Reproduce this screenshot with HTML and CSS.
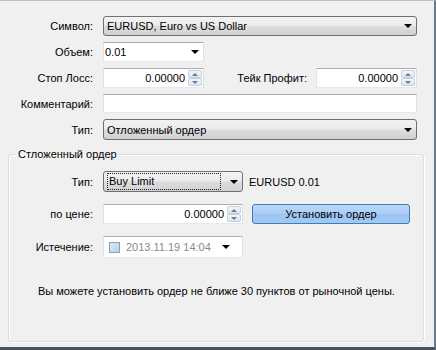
FILE: index.html
```html
<!DOCTYPE html>
<html lang="ru">

<head>
    <meta charset="UTF-8">
    <meta name="viewport" content="width=device-width, initial-scale=1.0">
    <title>Ордер</title>
    <link rel="stylesheet" href="styles.css">
</head>

<body>
    <div class="window">
        <div class="form">
            <label class="lbl">Символ:</label>
            <div class="combo combo-btn">
                <span class="combo-text">EURUSD, Euro vs US Dollar</span>
                <span class="arrow"></span>
            </div>

            <label class="lbl">Объем:</label>
            <div class="combo combo-edit volume">
                <span class="combo-text">0.01</span>
                <span class="arrow"></span>
            </div>

            <label class="lbl">Стоп Лосс:</label>
            <div class="pair">
                <div class="spin">
                    <span class="spin-value">0.00000</span>
                    <span class="spin-btns"><span class="up"></span><span class="down"></span></span>
                </div>
                <label class="lbl tp">Тейк Профит:</label>
                <div class="spin">
                    <span class="spin-value">0.00000</span>
                    <span class="spin-btns"><span class="up"></span><span class="down"></span></span>
                </div>
            </div>

            <label class="lbl">Комментарий:</label>
            <div class="edit"></div>

            <label class="lbl">Тип:</label>
            <div class="combo combo-btn">
                <span class="combo-text">Отложенный ордер</span>
                <span class="arrow"></span>
            </div>
        </div>

        <fieldset class="group">
            <legend>Стложенный ордер</legend>
            <div class="group-form">
                <label class="lbl">Тип:</label>
                <div class="line">
                    <div class="combo combo-btn narrow">
                        <span class="combo-text focus">Buy Limit</span>
                        <span class="arrow"></span>
                    </div>
                    <span class="info">EURUSD 0.01</span>
                </div>

                <label class="lbl">по цене:</label>
                <div class="line">
                    <div class="spin narrow">
                        <span class="spin-value">0.00000</span>
                        <span class="spin-btns"><span class="up"></span><span class="down"></span></span>
                    </div>
                    <button class="btn-set">Установить ордер</button>
                </div>

                <label class="lbl">Истечение:</label>
                <div class="line">
                    <div class="date narrow">
                        <span class="check"></span>
                        <span class="date-text">2013.11.19 14:04</span>
                        <span class="arrow"></span>
                    </div>
                </div>
            </div>
            <p class="note">Вы можете установить ордер не ближе 30 пунктов от рыночной цены.</p>
        </fieldset>
    </div>
</body>

</html>
```

FILE: styles.css
```css
body {
    margin: 0;
    padding: 0;
    background: #f0f0f0;
    font-family: Tahoma, "Liberation Sans", Arial, sans-serif;
    font-size: 11px;
    color: #000;
}

.window {
    width: 436px;
    height: 350px;
    box-sizing: border-box;
    display: flex;
    flex-direction: column;
    background: #f0f0f0;
    border-top: 1px solid #b9c1cc;
    border-right: 2px solid #6f7986;
    border-bottom: 3px solid #4b525c;
}

/* top part of the form */
.form {
    display: grid;
    grid-template-columns: 93px 1fr;
    grid-template-rows: 20px 20px 20px 19px 21px;
    column-gap: 10px;
    row-gap: 6px;
    padding: 15px 17px 0 0;
}

.lbl {
    display: flex;
    align-items: center;
    justify-content: flex-end;
    white-space: nowrap;
}

.pair {
    display: flex;
    align-items: stretch;
}

.pair .spin {
    width: 101px;
}

.lbl.tp {
    flex: 1;
    margin-right: 9px;
}

/* combo boxes */
.combo {
    display: flex;
    align-items: center;
    box-sizing: border-box;
    padding: 0 0 0 3px;
}

.combo-btn {
    border: 1px solid #707070;
    border-radius: 3px;
    background: linear-gradient(#f3f3f3 0%, #ebebeb 48%, #dddddd 52%, #d1d1d1 100%);
}

.combo-edit {
    border: 1px solid #abadb3;
    border-color: #abadb3 #dbdfe6 #e3e9ef #e2e3ea;
    background: #fff;
    padding-left: 1px;
}

.volume {
    width: 101px;
}

.combo-text {
    flex: 1;
    white-space: nowrap;
    overflow: hidden;
}

.combo-text.focus {
    border: 1px dotted #222;
    margin-right: 9px;
    padding: 1px 0 1px 1px;
    line-height: 13px;
}

.arrow {
    width: 0;
    height: 0;
    margin: 0 4px 0 0;
    border-left: 4px solid transparent;
    border-right: 4px solid transparent;
    border-top: 4px solid #000;
}

/* text and spin boxes */
.edit,
.spin,
.date {
    box-sizing: border-box;
    border: 1px solid #abadb3;
    border-color: #abadb3 #dbdfe6 #e3e9ef #e2e3ea;
    background: #fff;
}

.spin {
    display: flex;
    align-items: center;
}

.spin-value {
    flex: 1;
    text-align: right;
    padding-right: 3px;
}

.spin-btns {
    display: flex;
    flex-direction: column;
    width: 14px;
    height: 100%;
    margin-right: 1px;
    padding: 1px 0;
    box-sizing: border-box;
}

.spin-btns span {
    flex: 1;
    border: 1px solid #c3cfdd;
    border-radius: 2px;
    background: linear-gradient(#f2f6fa, #dfe6ef);
    display: flex;
    align-items: center;
    justify-content: center;
}

.spin-btns .up::after,
.spin-btns .down::after {
    content: "";
    border-left: 3px solid transparent;
    border-right: 3px solid transparent;
}

.spin-btns .up::after {
    border-bottom: 3px solid #6b7d95;
}

.spin-btns .down::after {
    border-top: 3px solid #6b7d95;
}

/* pending order group */
.group {
    flex: 1;
    margin: 7px 10px 5px 8px;
    padding: 0;
    border: 1px solid #d5dfe5;
    border-radius: 3px;
    box-shadow: inset 1px 1px 0 #fff, 1px 1px 0 #fff;
}

.group legend {
    margin-left: 7px;
    padding: 0 2px;
    line-height: 14px;
}

.group-form {
    display: grid;
    grid-template-columns: 84px 1fr;
    grid-template-rows: 21px 20px 22px;
    column-gap: 10px;
    row-gap: 12px;
    padding-top: 10px;
}

.line {
    display: flex;
    align-items: stretch;
}

.narrow {
    width: 140px;
}

.info {
    display: flex;
    align-items: center;
    margin-left: 6px;
}

.btn-set {
    width: 158px;
    margin-left: 9px;
    padding: 0;
    font: inherit;
    color: #000;
    border: 1px solid #3c7fb1;
    border-radius: 3px;
    background: linear-gradient(#bcd8f9 0%, #aacdf6 48%, #9dc4f3 52%, #a2c8f5 100%);
}

.date {
    display: flex;
    align-items: center;
    padding-left: 5px;
}

.check {
    width: 9px;
    height: 9px;
    border: 1px solid #8e9fb5;
    background: linear-gradient(135deg, #dbe8f6, #b9d0ea);
    margin-right: 6px;
}

.date-text {
    flex: 1;
    color: #8a8a8a;
}

.date .arrow {
    margin-right: 12px;
}

.note {
    margin: 26px 0 0 29px;
    line-height: 14px;
}
```
